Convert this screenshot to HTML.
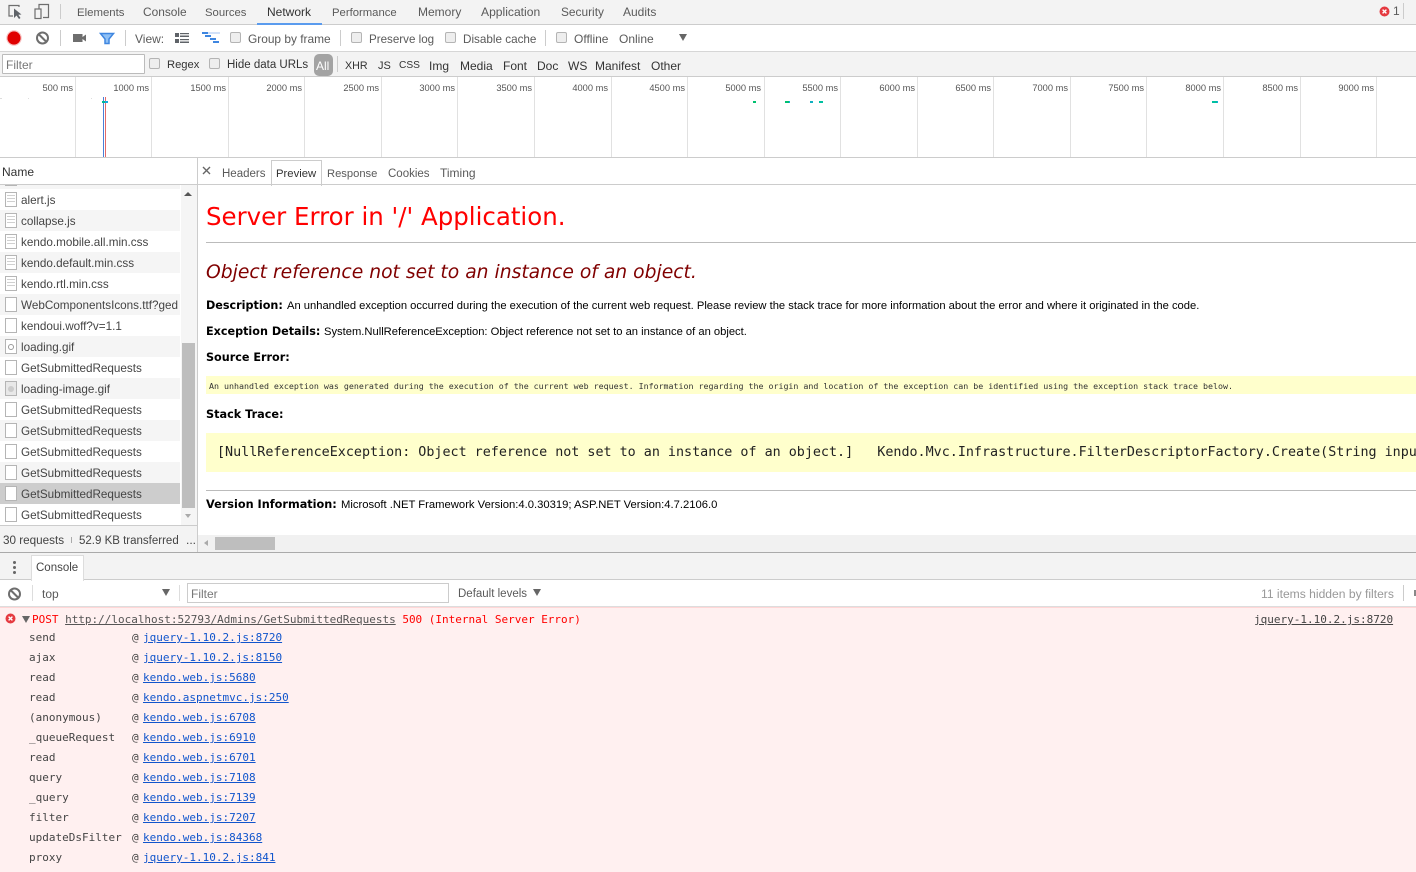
<!DOCTYPE html>
<html><head><meta charset="utf-8"><style>
html,body{margin:0;padding:0;width:1416px;height:872px;overflow:hidden;background:#fff}
body{position:relative;font:12px "Liberation Sans",sans-serif;color:#5a5a5a}
.b{position:absolute;display:block}
.t{position:absolute;white-space:nowrap;line-height:14px;height:14px}
.cb{position:absolute;width:9px;height:9px;border:1px solid #b4b4b4;border-radius:2px;background:#eee}
.g{position:absolute;top:77px;width:1px;height:80px;background:#e1e1e1}
.ms{position:absolute;top:82px;font-size:9.300px;line-height:12px;color:#555;text-align:right;width:70px;white-space:nowrap}
.r{position:absolute;left:0;width:180px;height:21px;background:#fff;overflow:hidden}
.r.e{background:#f5f5f5}.r.s{background:#cdcdcd}
.r i{position:absolute;left:5px;top:3px;width:10px;height:13px;border:1px solid #b5b5b5;background:#fff;display:block}
.r u{position:absolute;left:7px;height:1px;width:8px;background:#d0d0d0;display:block}
.r span{position:absolute;left:21px;top:4px;line-height:15px;font-size:11.700px;color:#444;white-space:nowrap}
.m{position:absolute;font:11px/14px "DejaVu Sans Mono","Liberation Mono",monospace;white-space:pre;color:#444}
.m a{color:#1155cc;text-decoration:underline}
.v{position:absolute;font-family:"DejaVu Sans",sans-serif;white-space:nowrap;color:#000}
.v b{font-weight:bold}
.a{font:11.200px/14px "Liberation Sans",sans-serif;color:#000}
</style></head><body>
<!-- top tabs -->
<div class="b" style="left:0;top:0;width:1416px;height:24px;background:#f3f3f3;border-bottom:1px solid #ccc"></div>
<svg class="b" style="left:6px;top:2px" width="46" height="18" viewBox="0 0 46 18" fill="none">
<path d="M13 5V3.500H3V14H7" stroke="#6e6e6e" stroke-width="1.200"/><path d="M8 6.500L8 16L10.500 13.500L13 17L14.500 16L12.300 12.800L15.500 12.500Z" fill="#5f6368"/>
<path d="M33 9V2.500H42.500V15.500H37" stroke="#6e6e6e" stroke-width="1.200"/><rect x="29" y="7" width="6" height="9.500" stroke="#6e6e6e" stroke-width="1.200" fill="#f3f3f3"/>
</svg>
<div class="b" style="left:60px;top:4px;width:1px;height:15px;background:#ccc"></div>
<span class="t" style="left:77px;top:6px;font-size:11.400px">Elements</span>
<span class="t" style="left:143px;top:5px;font-size:11.900px">Console</span>
<span class="t" style="left:205px;top:6px;font-size:11.300px">Sources</span>
<span class="t" style="left:267px;top:5px;color:#333">Network</span>
<div class="b" style="left:257px;top:23px;width:65px;height:2px;background:#5a9bee"></div>
<span class="t" style="left:332px;top:6px;font-size:11.300px">Performance</span>
<span class="t" style="left:418px;top:5px">Memory</span>
<span class="t" style="left:481px;top:5px;font-size:12.100px">Application</span>
<span class="t" style="left:561px;top:5px;font-size:11.900px">Security</span>
<span class="t" style="left:623px;top:5px">Audits</span>
<svg class="b" style="left:1379px;top:6px" width="11" height="11" viewBox="0 0 11 11"><circle cx="5.500" cy="5.500" r="5" fill="#e53a40"/><path d="M3.600 3.600L7.400 7.400M7.400 3.600L3.600 7.400" stroke="#fff" stroke-width="1.400"/></svg>
<span class="t" style="left:1393px;top:4px">1</span>
<div class="b" style="left:1403px;top:3px;width:1px;height:16px;background:#ccc"></div>
<!-- toolbar -->
<svg class="b" style="left:6px;top:30px" width="110" height="16" viewBox="0 0 110 16" fill="none">
<circle cx="8" cy="8" r="6.600" fill="#e00000"/><circle cx="8" cy="8" r="7.200" stroke="#e00000" stroke-opacity=".25"/>
<circle cx="36.500" cy="8" r="5.500" stroke="#6e6e6e" stroke-width="2"/><path d="M32.500 4L40.500 12" stroke="#6e6e6e" stroke-width="2"/>
<rect x="67" y="4" width="9.500" height="8" fill="#6e6e6e"/><path d="M76.500 7L80 4.500V11.500L76.500 9Z" fill="#6e6e6e"/>
<path d="M94.500 3.500H107.500L103 9V13.500H99V9Z" fill="#8fc0f5" stroke="#3f86e0" stroke-width="1.500"/>
</svg>
<div class="b" style="left:60px;top:30px;width:1px;height:16px;background:#ccc"></div>
<div class="b" style="left:125px;top:30px;width:1px;height:16px;background:#ccc"></div>
<span class="t" style="left:135px;top:32px">View:</span>
<svg class="b" style="left:175px;top:32px" width="46" height="13" viewBox="0 0 46 13">
<g fill="#5f6368"><rect x="0" y="1" width="4" height="4"/><rect x="0" y="7" width="4" height="4"/><rect x="5" y="1" width="9" height="1.200"/><rect x="5" y="3.500" width="9" height="1.500"/><rect x="5" y="7" width="9" height="1.200"/><rect x="5" y="9.500" width="9" height="1.500"/></g>
<rect x="27" y="0" width="18" height="2" fill="#d2e1f8"/><rect x="27" y="0" width="6" height="2" fill="#3f86e0"/><rect x="30" y="3" width="6" height="2" fill="#3f86e0"/><rect x="35" y="6" width="6" height="2" fill="#3f86e0"/><rect x="38" y="9" width="6" height="2" fill="#3f86e0"/>
</svg>
<div class="cb" style="left:230px;top:32px"></div><span class="t" style="left:248px;top:32px;font-size:11.900px">Group by frame</span>
<div class="b" style="left:340px;top:30px;width:1px;height:16px;background:#ccc"></div>
<div class="cb" style="left:351px;top:32px"></div><span class="t" style="left:369px;top:33px;font-size:11.600px">Preserve log</span>
<div class="cb" style="left:445px;top:32px"></div><span class="t" style="left:463px;top:33px;font-size:11.700px">Disable cache</span>
<div class="b" style="left:545px;top:30px;width:1px;height:16px;background:#ccc"></div>
<div class="cb" style="left:556px;top:32px"></div><span class="t" style="left:574px;top:32px">Offline</span>
<span class="t" style="left:619px;top:32px">Online</span>
<div class="b" style="left:679px;top:34px;border-left:4.500px solid transparent;border-right:4.500px solid transparent;border-top:7px solid #666;width:0;height:0"></div>
<div class="b" style="left:0;top:51px;width:1416px;height:1px;background:#d6d6d6"></div>
<!-- filter bar -->
<div class="b" style="left:0;top:52px;width:1416px;height:24px;background:#f3f3f3;border-bottom:1px solid #ccc"></div>
<div class="b" style="left:2px;top:54px;width:141px;height:18px;background:#fff;border:1px solid #bbb;border-radius:1px"></div>
<span class="t" style="left:6px;top:58px;color:#777">Filter</span>
<div class="cb" style="left:149px;top:58px"></div><span class="t" style="left:167px;top:58px;color:#333;font-size:11.200px">Regex</span>
<div class="cb" style="left:209px;top:58px"></div><span class="t" style="left:227px;top:58px;color:#333;font-size:11.500px">Hide data URLs</span>
<div class="b" style="left:314px;top:54px;width:19px;height:22px;background:#a3a3a3;border-radius:5px"></div>
<span class="t" style="left:316px;top:59px;color:#fff">All</span>
<div class="b" style="left:337px;top:56px;width:1px;height:16px;background:#ccc"></div>
<span class="t" style="left:345px;top:59px;color:#333;font-size:10.700px">XHR</span>
<span class="t" style="left:378px;top:59px;color:#333;font-size:11px">JS</span>
<span class="t" style="left:399px;top:59px;color:#333;font-size:10.200px">CSS</span>
<span class="t" style="left:429px;top:59px;color:#333">Img</span>
<span class="t" style="left:460px;top:59px;color:#333">Media</span>
<span class="t" style="left:503px;top:59px;color:#333">Font</span>
<span class="t" style="left:537px;top:59px;color:#333">Doc</span>
<span class="t" style="left:568px;top:59px;color:#333">WS</span>
<span class="t" style="left:595px;top:59px;color:#333">Manifest</span>
<span class="t" style="left:651px;top:59px;color:#333">Other</span>
<!-- overview -->
<i class="g" style="left:75px"></i><i class="g" style="left:151px"></i><i class="g" style="left:228px"></i><i class="g" style="left:304px"></i><i class="g" style="left:381px"></i><i class="g" style="left:457px"></i><i class="g" style="left:534px"></i><i class="g" style="left:611px"></i><i class="g" style="left:687px"></i><i class="g" style="left:764px"></i><i class="g" style="left:840px"></i><i class="g" style="left:917px"></i><i class="g" style="left:993px"></i><i class="g" style="left:1070px"></i><i class="g" style="left:1146px"></i><i class="g" style="left:1223px"></i><i class="g" style="left:1300px"></i><i class="g" style="left:1376px"></i>
<span class="ms" style="left:3px">500 ms</span><span class="ms" style="left:79px">1000 ms</span><span class="ms" style="left:156px">1500 ms</span><span class="ms" style="left:232px">2000 ms</span><span class="ms" style="left:309px">2500 ms</span><span class="ms" style="left:385px">3000 ms</span><span class="ms" style="left:462px">3500 ms</span><span class="ms" style="left:538px">4000 ms</span><span class="ms" style="left:615px">4500 ms</span><span class="ms" style="left:691px">5000 ms</span><span class="ms" style="left:768px">5500 ms</span><span class="ms" style="left:845px">6000 ms</span><span class="ms" style="left:921px">6500 ms</span><span class="ms" style="left:998px">7000 ms</span><span class="ms" style="left:1074px">7500 ms</span><span class="ms" style="left:1151px">8000 ms</span><span class="ms" style="left:1228px">8500 ms</span><span class="ms" style="left:1304px">9000 ms</span>
<div class="b" style="left:0;top:98px;width:2px;height:1px;background:#ddd"></div>
<div class="b" style="left:28px;top:98px;width:1px;height:1px;background:#ddd"></div>
<div class="b" style="left:91px;top:98px;width:1px;height:1px;background:#ddd"></div>
<div class="b" style="left:103px;top:97px;width:1px;height:60px;background:#4a7fd8"></div>
<div class="b" style="left:105px;top:97px;width:1px;height:60px;background:#e46a6a"></div>
<div class="b" style="left:102px;top:101px;width:3px;height:2px;background:#00b894"></div>
<div class="b" style="left:105px;top:101px;width:3px;height:2px;background:#18a8e0"></div>
<div class="b" style="left:753px;top:101px;width:3px;height:2px;background:#00c070"></div>
<div class="b" style="left:785px;top:101px;width:4px;height:2px;background:#00c070"></div>
<div class="b" style="left:789px;top:101px;width:1px;height:2px;background:#18a8e0"></div>
<div class="b" style="left:810px;top:101px;width:3px;height:2px;background:#10b0c0"></div>
<div class="b" style="left:819px;top:101px;width:4px;height:2px;background:#00c0a0"></div>
<div class="b" style="left:1212px;top:101px;width:5px;height:2px;background:#00c0a0"></div>
<div class="b" style="left:1217px;top:101px;width:1px;height:2px;background:#18a8e0"></div>
<div class="b" style="left:0;top:157px;width:1416px;height:1px;background:#ccc"></div>
<!-- left list -->
<span class="t" style="left:2px;top:165px;color:#333">Name</span>
<div class="b" style="left:0;top:184px;width:197px;height:1px;background:#ccc"></div>
<div class="b" style="left:197px;top:158px;width:1px;height:394px;background:#ccc"></div>
<div class="r e" style="top:185px;height:4px"><i style="top:-14px"></i></div>
<div class="r" style="top:189px"><i></i><u style="top:6px"></u><u style="top:9px"></u><u style="top:12px"></u><span>alert.js</span></div>
<div class="r e" style="top:210px"><i></i><u style="top:6px"></u><u style="top:9px"></u><u style="top:12px"></u><span>collapse.js</span></div>
<div class="r" style="top:231px"><i></i><u style="top:6px"></u><u style="top:9px"></u><u style="top:12px"></u><span>kendo.mobile.all.min.css</span></div>
<div class="r e" style="top:252px"><i></i><u style="top:6px"></u><u style="top:9px"></u><u style="top:12px"></u><span>kendo.default.min.css</span></div>
<div class="r" style="top:273px"><i></i><u style="top:6px"></u><u style="top:9px"></u><u style="top:12px"></u><span>kendo.rtl.min.css</span></div>
<div class="r e" style="top:294px"><i></i><span>WebComponentsIcons.ttf?ged</span></div>
<div class="r" style="top:315px"><i></i><span>kendoui.woff?v=1.1</span></div>
<div class="r e" style="top:336px"><i></i><u style="top:8px;left:8px;width:6px;height:6px;border-radius:50%;background:#fff;border:1px solid #999;box-sizing:border-box"></u><span>loading.gif</span></div>
<div class="r" style="top:357px"><i></i><span>GetSubmittedRequests</span></div>
<div class="r e" style="top:378px"><i style="background:#e8e8e8"></i><u style="top:8px;left:8px;width:6px;height:6px;border-radius:50%;background:#ccc"></u><span>loading-image.gif</span></div>
<div class="r" style="top:399px"><i></i><span>GetSubmittedRequests</span></div>
<div class="r e" style="top:420px"><i></i><span>GetSubmittedRequests</span></div>
<div class="r" style="top:441px"><i></i><span>GetSubmittedRequests</span></div>
<div class="r e" style="top:462px"><i></i><span>GetSubmittedRequests</span></div>
<div class="r s" style="top:483px"><i></i><span>GetSubmittedRequests</span></div>
<div class="r" style="top:504px"><i></i><span>GetSubmittedRequests</span></div>
<div class="b" style="left:181px;top:185px;width:16px;height:340px;background:#f5f5f5"></div>
<div class="b" style="left:182px;top:343px;width:13px;height:165px;background:#bebebe"></div>
<div class="b" style="left:184px;top:192px;border-left:4px solid transparent;border-right:4px solid transparent;border-bottom:4px solid #555;width:0;height:0"></div>
<div class="b" style="left:185px;top:514px;border-left:3.500px solid transparent;border-right:3.500px solid transparent;border-top:4px solid #aaa;width:0;height:0"></div>
<div class="b" style="left:0;top:525px;width:197px;height:1px;background:#ccc"></div>
<div class="b" style="left:0;top:526px;width:197px;height:26px;background:#f3f3f3"></div>
<span class="t" style="left:3px;top:534px;color:#444;font-size:11.700px">30 requests</span>
<div class="b" style="left:71px;top:537px;width:1px;height:6px;background:#aaa"></div>
<span class="t" style="left:79px;top:534px;color:#444;font-size:11.500px">52.9 KB transferred</span>
<span class="t" style="left:186px;top:533px;color:#444">...</span>
<!-- right tabs -->
<svg class="b" style="left:202px;top:166px" width="9" height="9" viewBox="0 0 9 9"><path d="M1 1L8 8M8 1L1 8" stroke="#666" stroke-width="1.400"/></svg>
<span class="t" style="left:222px;top:167px;font-size:11.500px">Headers</span>
<div class="b" style="left:271px;top:160px;width:49px;height:25px;background:#fff;border:1px solid #ccc;border-bottom:0"></div>
<span class="t" style="left:276px;top:167px;color:#333;font-size:11.300px">Preview</span>
<span class="t" style="left:327px;top:167px;font-size:11.200px">Response</span>
<span class="t" style="left:388px;top:167px;font-size:11.500px">Cookies</span>
<span class="t" style="left:440px;top:166px">Timing</span>
<div class="b" style="left:198px;top:184px;width:1218px;height:1px;background:#ccc"></div>
<!-- preview -->
<span class="v" style="left:206px;top:202px;font-size:24.480px;line-height:29px;color:#f00">Server Error in '/' Application.</span>
<div class="b" style="left:206px;top:242px;width:1210px;height:1px;background:#bbb"></div>
<span class="v" style="left:206px;top:261px;font-size:18.740px;line-height:24px;color:#800000;font-style:italic">Object reference not set to an instance of an object.</span>
<span class="v" style="left:206px;top:299px;font-size:11.200px;line-height:14px"><b>Description:</b></span>
<span class="a v" style="left:287px;top:299px">An unhandled exception occurred during the execution of the current web request. Please review the stack trace for more information about the error and where it originated in the code.</span>
<span class="v" style="left:206px;top:325px;font-size:11.200px;line-height:14px"><b>Exception Details:</b></span>
<span class="a v" style="left:324px;top:325px">System.NullReferenceException: Object reference not set to an instance of an object.</span>
<span class="v" style="left:206px;top:351px;font-size:11.200px;line-height:14px"><b>Source Error:</b></span>
<div class="b" style="left:206px;top:376px;width:1210px;height:18px;background:#ffffcc"></div>
<span class="m" style="left:209px;top:380px;font-size:8.310px;line-height:13px;color:#333">An unhandled exception was generated during the execution of the current web request. Information regarding the origin and location of the exception can be identified using the exception stack trace below.</span>
<span class="v" style="left:206px;top:408px;font-size:11.250px;line-height:14px"><b>Stack Trace:</b></span>
<div class="b" style="left:206px;top:433px;width:1210px;height:39px;overflow:hidden;background:#ffffcc"><span class="m" style="left:11px;top:12px;font-size:13.390px;line-height:16px;color:#222">[NullReferenceException: Object reference not set to an instance of an object.]   Kendo.Mvc.Infrastructure.FilterDescriptorFactory.Create(String input)</span></div>
<div class="b" style="left:206px;top:490px;width:1210px;height:1px;background:#bbb"></div>
<span class="v" style="left:206px;top:498px;font-size:11.270px;line-height:14px"><b>Version Information:</b></span>
<span class="a v" style="left:341px;top:498px;font-size:11.260px">Microsoft .NET Framework Version:4.0.30319; ASP.NET Version:4.7.2106.0</span>
<div class="b" style="left:198px;top:535px;width:1218px;height:17px;background:#f1f1f1"></div>
<div class="b" style="left:215px;top:537px;width:60px;height:13px;background:#bebebe"></div>
<div class="b" style="left:204px;top:540px;border-top:3.500px solid transparent;border-bottom:3.500px solid transparent;border-right:4px solid #aaa;width:0;height:0"></div>
<div class="b" style="left:0;top:552px;width:1416px;height:1px;background:#aaa"></div>
<!-- console drawer -->
<div class="b" style="left:0;top:553px;width:1416px;height:26px;background:#f3f3f3;border-bottom:1px solid #ccc"></div>
<div class="b" style="left:13px;top:561px;width:3px;height:3px;background:#666;border-radius:50%;box-shadow:0 5px 0 #666,0 10px 0 #666"></div>
<div class="b" style="left:31px;top:555px;width:51px;height:25px;background:#fff;border:1px solid #ddd;border-bottom:0"></div>
<span class="t" style="left:36px;top:561px;color:#444;font-size:11.500px">Console</span>
<svg class="b" style="left:8px;top:587px" width="14" height="14" viewBox="0 0 14 14" fill="none"><circle cx="6.500" cy="7" r="5.500" stroke="#6e6e6e" stroke-width="2"/><path d="M2.500 3L10.500 11" stroke="#6e6e6e" stroke-width="2"/></svg>
<div class="b" style="left:32px;top:585px;width:1px;height:16px;background:#ddd"></div>
<span class="t" style="left:42px;top:587px">top</span>
<div class="b" style="left:162px;top:589px;border-left:4px solid transparent;border-right:4px solid transparent;border-top:7px solid #666;width:0;height:0"></div>
<div class="b" style="left:179px;top:585px;width:1px;height:16px;background:#ddd"></div>
<div class="b" style="left:187px;top:583px;width:260px;height:18px;background:#fff;border:1px solid #ccc"></div>
<span class="t" style="left:191px;top:587px;color:#777">Filter</span>
<span class="t" style="left:458px;top:587px;font-size:11.500px">Default levels</span>
<div class="b" style="left:533px;top:589px;border-left:4px solid transparent;border-right:4px solid transparent;border-top:7px solid #666;width:0;height:0"></div>
<span class="t" style="left:1261px;top:587px;color:#999;font-size:12.100px">11 items hidden by filters</span>
<div class="b" style="left:1403px;top:585px;width:1px;height:16px;background:#ccc"></div>
<div class="b" style="left:1414px;top:590px;width:2px;height:6px;background:#888"></div>
<div class="b" style="left:0;top:606px;width:1416px;height:1px;background:#ddd"></div>
<div class="b" style="left:0;top:607px;width:1416px;height:265px;background:#fff0f0;border-top:1px solid #ffd6d6;box-sizing:border-box"></div>
<svg class="b" style="left:5px;top:613px" width="11" height="11" viewBox="0 0 11 11"><circle cx="5.500" cy="5.500" r="5" fill="#e53a40"/><path d="M3.600 3.600L7.400 7.400M7.400 3.600L3.600 7.400" stroke="#fff" stroke-width="1.400"/></svg>
<div class="b" style="left:22px;top:616px;border-left:4px solid transparent;border-right:4px solid transparent;border-top:7px solid #666;width:0;height:0"></div>
<span class="m" style="left:32px;top:613px;color:#f00;letter-spacing:-.01px">POST <a style="color:#555">http://localhost:52793/Admins/GetSubmittedRequests</a> 500 (Internal Server Error)</span>
<span class="m" style="left:1254px;top:613px"><a style="color:#444">jquery-1.10.2.js:8720</a></span>
<span class="m" style="left:29px;top:631px">send</span><span class="m" style="left:132px;top:631px">@</span><span class="m" style="left:143px;top:631px"><a>jquery-1.10.2.js:8720</a></span>
<span class="m" style="left:29px;top:651px">ajax</span><span class="m" style="left:132px;top:651px">@</span><span class="m" style="left:143px;top:651px"><a>jquery-1.10.2.js:8150</a></span>
<span class="m" style="left:29px;top:671px">read</span><span class="m" style="left:132px;top:671px">@</span><span class="m" style="left:143px;top:671px"><a>kendo.web.js:5680</a></span>
<span class="m" style="left:29px;top:691px">read</span><span class="m" style="left:132px;top:691px">@</span><span class="m" style="left:143px;top:691px"><a>kendo.aspnetmvc.js:250</a></span>
<span class="m" style="left:29px;top:711px">(anonymous)</span><span class="m" style="left:132px;top:711px">@</span><span class="m" style="left:143px;top:711px"><a>kendo.web.js:6708</a></span>
<span class="m" style="left:29px;top:731px">_queueRequest</span><span class="m" style="left:132px;top:731px">@</span><span class="m" style="left:143px;top:731px"><a>kendo.web.js:6910</a></span>
<span class="m" style="left:29px;top:751px">read</span><span class="m" style="left:132px;top:751px">@</span><span class="m" style="left:143px;top:751px"><a>kendo.web.js:6701</a></span>
<span class="m" style="left:29px;top:771px">query</span><span class="m" style="left:132px;top:771px">@</span><span class="m" style="left:143px;top:771px"><a>kendo.web.js:7108</a></span>
<span class="m" style="left:29px;top:791px">_query</span><span class="m" style="left:132px;top:791px">@</span><span class="m" style="left:143px;top:791px"><a>kendo.web.js:7139</a></span>
<span class="m" style="left:29px;top:811px">filter</span><span class="m" style="left:132px;top:811px">@</span><span class="m" style="left:143px;top:811px"><a>kendo.web.js:7207</a></span>
<span class="m" style="left:29px;top:831px">updateDsFilter</span><span class="m" style="left:132px;top:831px">@</span><span class="m" style="left:143px;top:831px"><a>kendo.web.js:84368</a></span>
<span class="m" style="left:29px;top:851px">proxy</span><span class="m" style="left:132px;top:851px">@</span><span class="m" style="left:143px;top:851px"><a>jquery-1.10.2.js:841</a></span>
</body></html>
